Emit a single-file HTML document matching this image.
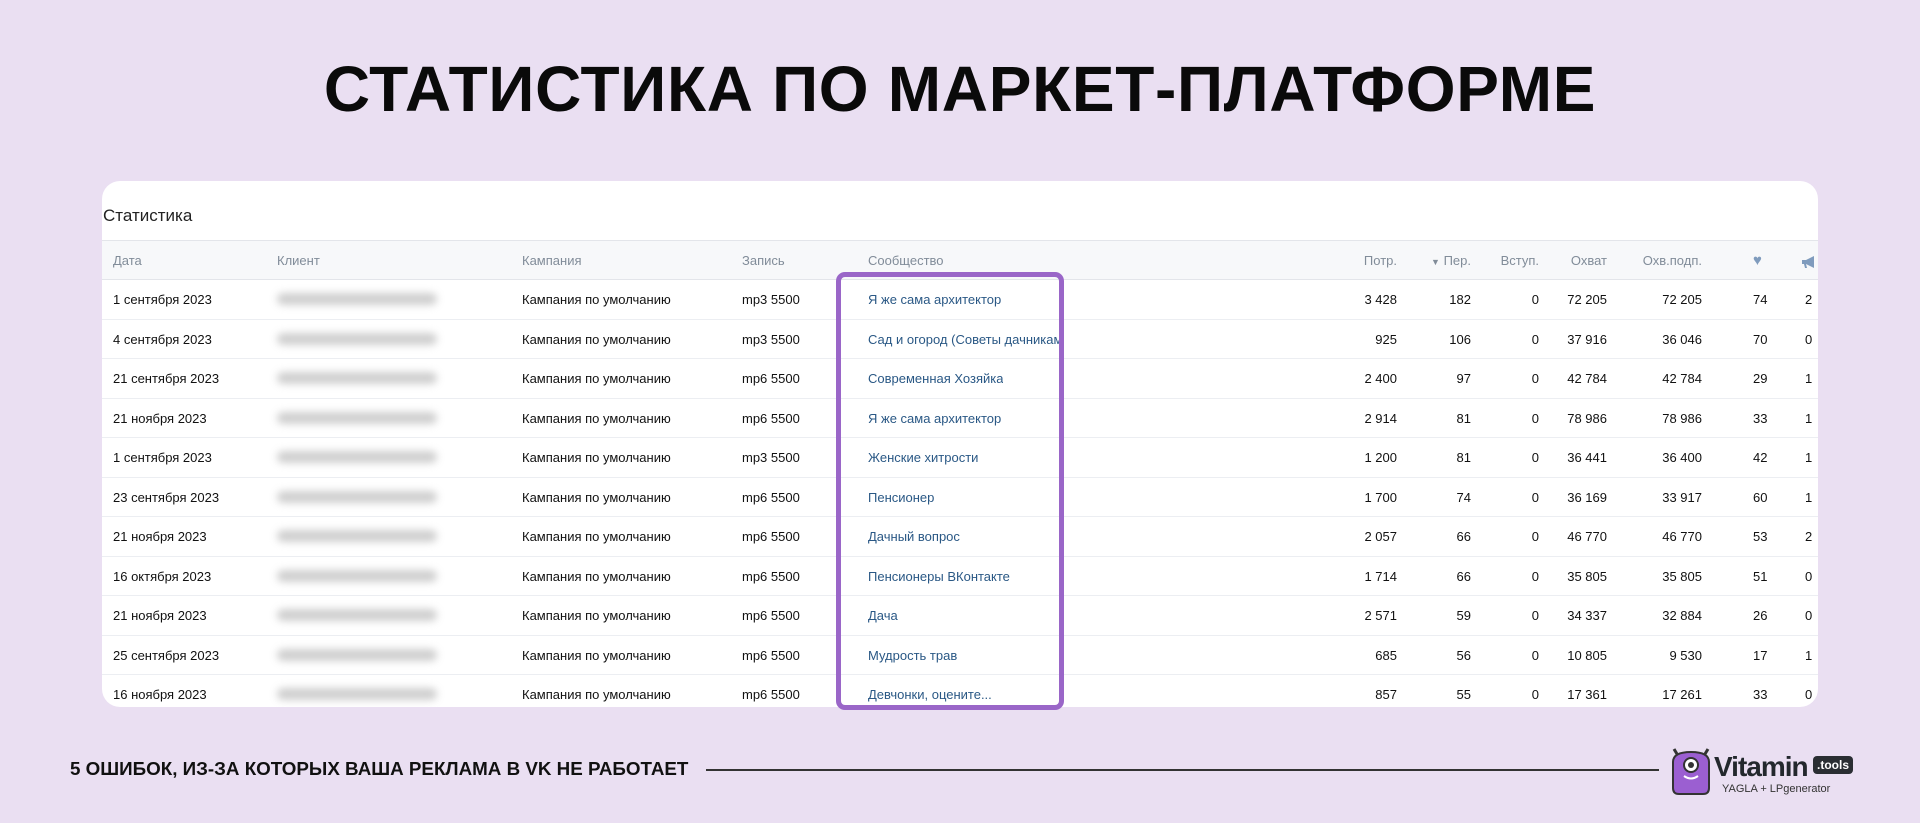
<!DOCTYPE html>
<html><head><meta charset="utf-8"><style>
*{margin:0;padding:0;box-sizing:border-box}
body{width:1920px;height:823px;background:#eadff2;position:relative;overflow:hidden;font-family:"Liberation Sans",sans-serif}
.title{position:absolute;left:0;width:1920px;top:52px;text-align:center;font-size:64px;font-weight:bold;color:#0a0a0a;letter-spacing:0.7px}
.card{position:absolute;left:102px;top:181px;width:1716px;height:526px;background:#fff;border-radius:18px;overflow:hidden}
.cap{position:absolute;left:1px;top:25px;font-size:17px;color:#222}
.hdr{position:absolute;left:0;top:59px;width:100%;height:40px;background:#f7f8fa;border-top:1px solid #e3e5ea;border-bottom:1px solid #e3e5ea}
.row{position:absolute;left:0;width:100%;height:39.5px;border-bottom:1px solid #eceef2}
.c{position:absolute;top:0;line-height:39px;font-size:13px;color:#111;white-space:nowrap}
.h .c{color:#818c99;font-size:13px}
.r{text-align:right}
.lk{color:#2a5885}
.blur{position:absolute;left:175px;top:13px;width:160px;height:12px;background:#bbb;border-radius:6px;filter:blur(4px);opacity:.7}
.box{position:absolute;left:836px;top:272px;width:228px;height:438px;border:5px solid #9a66c8;border-radius:9px}
.foot{position:absolute;left:70px;top:758px;font-size:18.8px;font-weight:bold;color:#111}
.line{position:absolute;left:706px;top:769px;width:953px;height:2px;background:#333}
</style></head><body>
<div class="title">СТАТИСТИКА ПО МАРКЕТ-ПЛАТФОРМЕ</div>
<div class="card">
<div class="cap">Статистика</div>
<div class="hdr h">
<div class="c" style="left:11px">Дата</div>
<div class="c" style="left:175px">Клиент</div>
<div class="c" style="left:420px">Кампания</div>
<div class="c" style="left:640px">Запись</div>
<div class="c" style="left:766px">Сообщество</div>
<div class="c r" style="right:421px">Потр.</div>
<div class="c r" style="right:347px"><span style="font-size:9px">▼</span> Пер.</div>
<div class="c r" style="right:279px">Вступ.</div>
<div class="c r" style="right:211px">Охват</div>
<div class="c r" style="right:116px">Охв.подп.</div>
<div class="c" style="left:1651px;color:#7f9bbd;font-size:15px">♥</div>
<div class="c" style="left:1699px;color:#7f9bbd"><svg width="16" height="14" viewBox="0 0 16 14" style="vertical-align:middle"><path d="M1 5h4l8-4v12l-8-4H1z M3 9l1 4h2l-1-4z" fill="#7f9bbd"/></svg></div>
</div>
<div id="rows"></div>
</div>
<div class="box"></div>
<div class="foot">5 ОШИБОК, ИЗ-ЗА КОТОРЫХ ВАША РЕКЛАМА В VK НЕ РАБОТАЕТ</div>
<div class="line"></div>
<svg style="position:absolute;left:1669px;top:748px" width="44" height="50" viewBox="0 0 44 50"><path d="M8 6 L5 1 M36 6 L39 1" stroke="#333" stroke-width="3"/><path d="M4 14 Q4 4 22 4 Q40 4 40 14 L40 40 Q40 46 34 46 L10 46 Q4 46 4 40Z" fill="#9b5fd1" stroke="#333" stroke-width="2"/><circle cx="22" cy="17" r="7" fill="#fff" stroke="#333" stroke-width="2"/><circle cx="22" cy="17" r="3" fill="#333"/><path d="M15 28 Q22 33 29 28" stroke="#fff" stroke-width="2" fill="none"/></svg>
<div style="position:absolute;left:1714px;top:751px;font-size:28px;font-weight:bold;color:#23282d;letter-spacing:-1px">Vitamin</div>
<div style="position:absolute;left:1813px;top:756px;background:#2a2e33;color:#fff;font-size:12px;font-weight:bold;padding:2px 4px;border-radius:4px">.tools</div>
<div style="position:absolute;left:1722px;top:783px;font-size:11px;color:#333">YAGLA + LPgenerator</div>
<script>
var d=[["1 сентября 2023","mp3 5500","Я же сама архитектор","3 428","182","72 205","72 205","74","2"],
["4 сентября 2023","mp3 5500","Сад и огород (Советы дачникам)","925","106","37 916","36 046","70","0"],
["21 сентября 2023","mp6 5500","Современная Хозяйка","2 400","97","42 784","42 784","29","1"],
["21 ноября 2023","mp6 5500","Я же сама архитектор","2 914","81","78 986","78 986","33","1"],
["1 сентября 2023","mp3 5500","Женские хитрости","1 200","81","36 441","36 400","42","1"],
["23 сентября 2023","mp6 5500","Пенсионер","1 700","74","36 169","33 917","60","1"],
["21 ноября 2023","mp6 5500","Дачный вопрос","2 057","66","46 770","46 770","53","2"],
["16 октября 2023","mp6 5500","Пенсионеры ВКонтакте","1 714","66","35 805","35 805","51","0"],
["21 ноября 2023","mp6 5500","Дача","2 571","59","34 337","32 884","26","0"],
["25 сентября 2023","mp6 5500","Мудрость трав","685","56","10 805","9 530","17","1"],
["16 ноября 2023","mp6 5500","Девчонки, оцените...","857","55","17 361","17 261","33","0"]];
var h="";d.forEach(function(r,i){h+='<div class="row" style="top:'+(99+i*39.5)+'px">'+
'<div class="c" style="left:11px">'+r[0]+'</div><div class="blur"></div>'+
'<div class="c" style="left:420px">Кампания по умолчанию</div>'+
'<div class="c" style="left:640px">'+r[1]+'</div>'+
'<div class="c lk" style="left:766px;max-width:196px;overflow:hidden">'+r[2]+'</div>'+
'<div class="c r" style="right:421px">'+r[3]+'</div>'+
'<div class="c r" style="right:347px">'+r[4]+'</div>'+
'<div class="c r" style="right:279px">0</div>'+
'<div class="c r" style="right:211px">'+r[5]+'</div>'+
'<div class="c r" style="right:116px">'+r[6]+'</div>'+
'<div class="c" style="left:1651px">'+r[7]+'</div>'+
'<div class="c" style="left:1703px">'+r[8]+'</div></div>';});
document.getElementById("rows").innerHTML=h;
</script>
</body></html>
